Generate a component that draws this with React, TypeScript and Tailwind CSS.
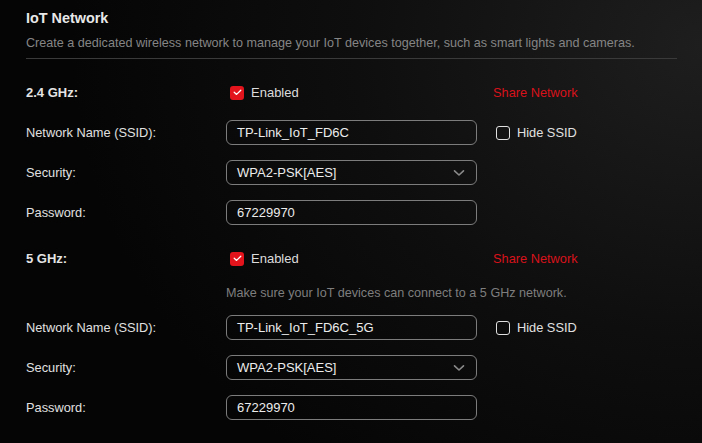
import React from "react";

const font = { fontFamily: '"Liberation Sans", Arial, sans-serif' };

function RedCheck() {
  return (
    <span className="flex h-[14px] w-[14px] items-center justify-center rounded-[3px] bg-[#e3141c]">
      <svg width="9" height="7" viewBox="0 0 9 7" fill="none">
        <path d="M1.2 3.2 L3.6 5.4 L7.8 1.3" stroke="#fff" strokeWidth="1.3" strokeLinecap="round" strokeLinejoin="round" />
      </svg>
    </span>
  );
}

function BandRow({ label }: { label: string }) {
  return (
    <div className="flex h-[25px] items-center">
      <div className="w-[200px] shrink-0 text-[13px] font-bold text-[#e4e4e4]">{label}</div>
      <div className="flex w-[251px] items-center gap-[7px] pl-[4px]">
        <RedCheck />
        <span className="text-[13px] text-[#dcdcdc]">Enabled</span>
      </div>
      <div className="ml-[16px] text-[12.8px] text-[#d8121b]">Share Network</div>
    </div>
  );
}

function Field({ label, value, select, hide }: { label: string; value: string; select?: boolean; hide?: boolean }) {
  return (
    <div className="flex h-[25px] items-center">
      <div className="w-[200px] shrink-0 text-[12.8px] text-[#e0e0e0]">{label}</div>
      <div className="flex h-[25px] w-[251px] items-center justify-between rounded-[6px] border border-[#7c7c7c] pl-[10px] pr-[10px] text-[13px] text-[#ececec]">
        <span>{value}</span>
        {select && (
          <svg width="12" height="8" viewBox="0 0 12 8" fill="none" className="mr-[1px]">
            <path d="M1.5 1.8 L6 6 L10.5 1.8" stroke="#8a8a8a" strokeWidth="1.6" strokeLinecap="round" strokeLinejoin="round" />
          </svg>
        )}
      </div>
      {hide && (
        <div className="ml-[19px] flex items-center gap-[7px]">
          <span className="h-[14px] w-[14px] rounded-[3px] border border-[#e0e0e0]" />
          <span className="text-[12.8px] text-[#e0e0e0]">Hide SSID</span>
        </div>
      )}
    </div>
  );
}

export default function App() {
  return (
    <div
      style={font}
      className="h-[443px] w-[702px] overflow-hidden bg-[radial-gradient(ellipse_90%_120%_at_100%_10%,#1e1e1e_0%,#0e0e0e_55%,#050505_100%)]"
    >
      <div className="px-[26px] pt-[9px]">
        <div className="h-[18px] text-[14.4px] font-bold leading-[18px] text-[#e8e8e8]">IoT Network</div>
        <div className="mt-[7px] h-[18px] text-[12.6px] leading-[18px] text-[#858585]">
          Create a dedicated wireless network to manage your IoT devices together, such as smart lights and cameras.
        </div>
        <div className="mt-[6px] h-px w-[651px] bg-[#3a3a3a]" />

        <div className="mt-[21px]">
          <BandRow label="2.4 GHz:" />
        </div>
        <div className="mt-[15px]">
          <Field label="Network Name (SSID):" value="TP-Link_IoT_FD6C" hide />
        </div>
        <div className="mt-[15px]">
          <Field label="Security:" value="WPA2-PSK[AES]" select />
        </div>
        <div className="mt-[15px]">
          <Field label="Password:" value="67229970" />
        </div>

        <div className="mt-[21px]">
          <BandRow label="5 GHz:" />
        </div>
        <div className="mt-[13px] h-[18px] pl-[200px] text-[12.6px] leading-[18px] text-[#7e7e7e]">
          Make sure your IoT devices can connect to a 5 GHz network.
        </div>
        <div className="mt-[13px]">
          <Field label="Network Name (SSID):" value="TP-Link_IoT_FD6C_5G" hide />
        </div>
        <div className="mt-[15px]">
          <Field label="Security:" value="WPA2-PSK[AES]" select />
        </div>
        <div className="mt-[15px]">
          <Field label="Password:" value="67229970" />
        </div>
      </div>
    </div>
  );
}
